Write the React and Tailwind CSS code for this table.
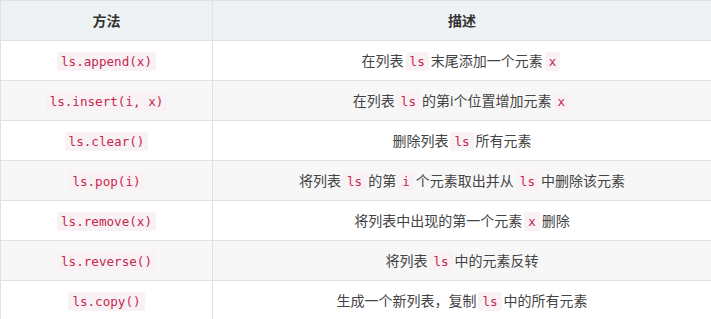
import React from "react";

const C = ({ children, m }) => (
  <code
    className={`rounded-[3px] bg-[#f9f2f4] px-[4px] py-[2px] text-[12.6px] text-[#c7254e] [font-family:'DejaVu_Sans_Mono','Liberation_Mono',monospace] ${
      m ? "mx-[2px]" : ""
    }`}
  >
    {children}
  </code>
);

const rows = [
  ["ls.append(x)", <>在列表<C m>ls</C>末尾添加一个元素<C m>x</C></>],
  ["ls.insert(i, x)", <>在列表<C m>ls</C>的第i个位置增加元素<C m>x</C></>],
  ["ls.clear()", <>删除列表<C m>ls</C>所有元素</>],
  ["ls.pop(i)", <>将列表<C m>ls</C>的第<C m>i</C>个元素取出并从<C m>ls</C>中删除该元素</>],
  ["ls.remove(x)", <>将列表中出现的第一个元素<C m>x</C>删除</>],
  ["ls.reverse()", <>将列表<C m>ls</C>中的元素反转</>],
  ["ls.copy()", <>生成一个新列表，复制<C m>ls</C>中的所有元素</>],
];

export default function App() {
  return (
    <div className="h-[319px] w-[711px] overflow-hidden bg-white [font-family:'Open_Sans','Noto_Sans_CJK_SC',sans-serif]">
      <table className="w-[712px] border-collapse text-[14px] text-[#444]">
        <thead>
          <tr className="h-[40px] bg-[#eff2f5]">
            <th className="w-[212px] border border-[#dfe2e5] font-bold text-[#333]">方法</th>
            <th className="border border-[#dfe2e5] font-bold text-[#333]">描述</th>
          </tr>
        </thead>
        <tbody>
          {rows.map(([m, d], i) => (
            <tr key={i} className={`h-[40px] ${i % 2 === 1 ? "bg-[#f7f7f7]" : "bg-white"}`}>
              <td className="border border-[#dfe2e5] text-center">
                <C>{m}</C>
              </td>
              <td className="border border-[#dfe2e5] text-center">{d}</td>
            </tr>
          ))}
        </tbody>
      </table>
    </div>
  );
}
